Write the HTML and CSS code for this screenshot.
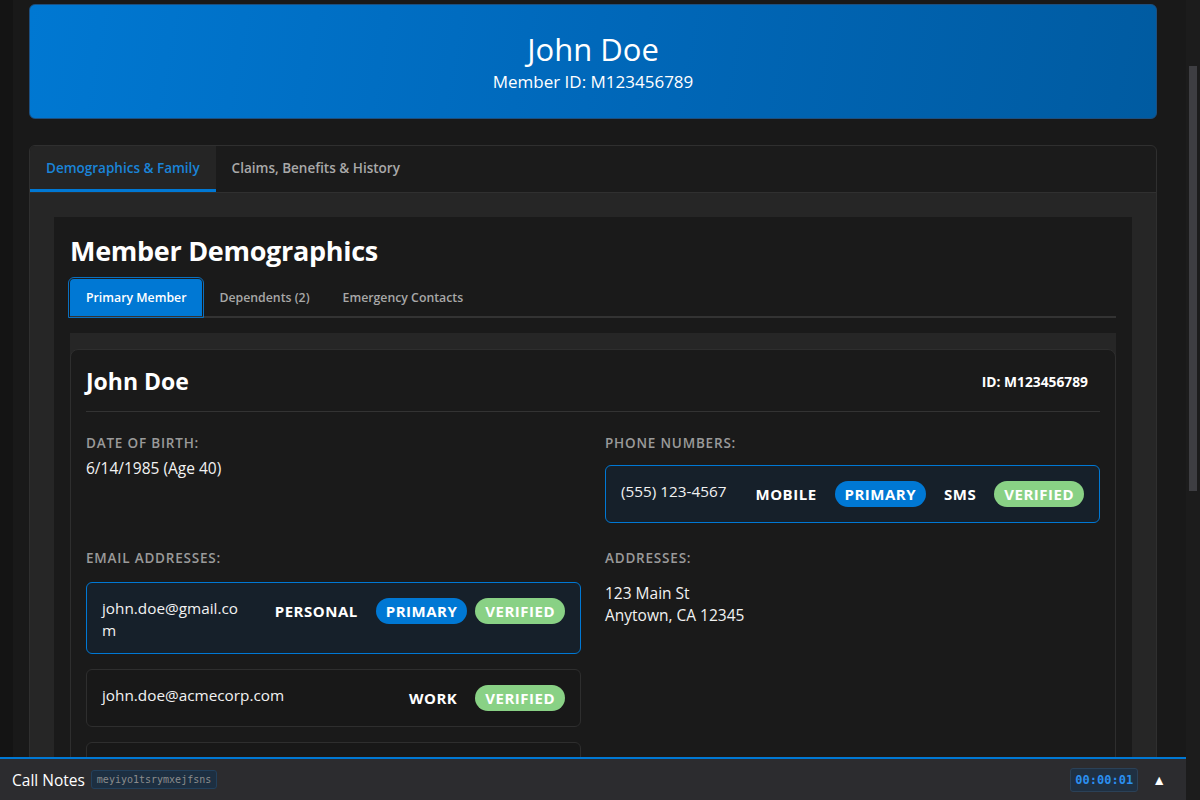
FILE: index.html
```html
<!DOCTYPE html>
<html lang="en">
<head>
<meta charset="utf-8">
<title>Member Profile – John Doe</title>
<link rel="stylesheet" href="styles.css">
</head>
<body>
<main class="page">
  <header class="member-header">
    <h1 class="member-name">John Doe</h1>
    <p class="member-id">Member ID: M123456789</p>
  </header>

  <section class="tabs">
    <nav class="tab-bar">
      <button class="tab active">Demographics &amp; Family</button>
      <button class="tab">Claims, Benefits &amp; History</button>
    </nav>
    <div class="tab-panel">
      <div class="demo">
        <h2 class="demo-title">Member Demographics</h2>
        <nav class="subtabs">
          <button class="subtab active">Primary Member</button>
          <button class="subtab">Dependents (2)</button>
          <button class="subtab">Emergency Contacts</button>
        </nav>
        <div class="subpanel">
          <article class="card">
            <div class="card-head">
              <h3 class="card-name">John Doe</h3>
              <span class="card-id">ID: M123456789</span>
            </div>
            <div class="grid">
              <div class="field">
                <div class="label">Date of Birth:</div>
                <div class="value dob">6/14/1985 (Age 40)</div>
              </div>
              <div class="field">
                <div class="label">Phone Numbers:</div>
                <div class="contact-list phones">
                  <div class="contact primary phone-row">
                    <span class="contact-text phone">(555) 123-4567</span>
                    <span class="badges">
                      <span class="badge type">MOBILE</span>
                      <span class="badge pri">PRIMARY</span>
                      <span class="badge type">SMS</span>
                      <span class="badge ok">VERIFIED</span>
                    </span>
                  </div>
                </div>
              </div>
              <div class="field">
                <div class="label">Email Addresses:</div>
                <div class="contact-list">
                  <div class="contact primary">
                    <span class="contact-text">john.doe@gmail.com</span>
                    <span class="badges">
                      <span class="badge type">PERSONAL</span>
                      <span class="badge pri">PRIMARY</span>
                      <span class="badge ok">VERIFIED</span>
                    </span>
                  </div>
                  <div class="contact">
                    <span class="contact-text">john.doe@acmecorp.com</span>
                    <span class="badges">
                      <span class="badge type">WORK</span>
                      <span class="badge ok">VERIFIED</span>
                    </span>
                  </div>
                  <div class="contact">
                    <span class="contact-text">jdoe85@outlook.com</span>
                    <span class="badges">
                      <span class="badge type">OTHER</span>
                      <span class="badge ok">VERIFIED</span>
                    </span>
                  </div>
                </div>
              </div>
              <div class="field">
                <div class="label">Addresses:</div>
                <div class="value address">123 Main St<br>Anytown, CA 12345</div>
              </div>
            </div>
          </article>
        </div>
      </div>
    </div>
  </section>
</main>

<footer class="callbar">
  <span class="callbar-title">Call Notes</span>
  <span class="session-chip">meyiyo1tsrymxejfsns</span>
  <span class="callbar-spacer"></span>
  <span class="timer">00:00:01</span>
  <button class="toggle">▲</button>
</footer>

<div class="scrollbar" aria-hidden="true"><div class="scrollbar-thumb"></div></div>
</body>
</html>
```

FILE: styles.css
```css
* { box-sizing: border-box; }

html {
  background: #141414;
}

body {
  margin: 0;
  height: 100vh;
  overflow: hidden;
  display: grid;
  grid-template-columns: 1fr 14px;
  grid-template-rows: 1fr 43px;
  background: #141414;
  color: #ececec;
  font-family: "Open Sans", "Noto Sans", sans-serif;
}

.page {
  grid-column: 1;
  grid-row: 1;
  min-height: 0;
  overflow: hidden;
  margin-left: 13px;
  padding: 4px 29px 0 16px;
  background: #191919;
}

/* header */
.member-header {
  background: linear-gradient(100deg, #0078d2 0%, #0068ba 50%, #005ba1 100%);
  border: 1px solid #1c4f80;
  border-radius: 6px;
  padding: 25px 20px 24px;
  text-align: center;
  color: #fff;
}

.member-name {
  margin: 0;
  font-size: 31px;
  font-weight: 400;
  line-height: 38px;
}

.member-id {
  margin: 2px 0 0;
  font-size: 17px;
  line-height: 24px;
}

/* main tabs */
.tabs {
  margin-top: 26px;
  border: 1px solid #2f2f2f;
  border-radius: 6px;
  background: #1b1b1b;
  overflow: hidden;
}

.tab-bar {
  display: flex;
  border-bottom: 1px solid #303030;
}

.tab {
  height: 46px;
  padding: 0 16px;
  background: none;
  border: 0;
  border-bottom: 3px solid transparent;
  color: #a9a9a9;
  font-family: inherit;
  font-size: 13.5px;
  font-weight: 600;
}

.tab.active {
  background: #252525;
  color: #1a84d8;
  border-bottom-color: #0078d4;
}

.tab-panel {
  background: #262626;
  padding: 24px;
}

.demo {
  background: #1a1a1a;
  padding: 16px;
}

.demo-title {
  margin: 0 0 10px;
  font-size: 27px;
  font-weight: 700;
  line-height: 36px;
  letter-spacing: -0.3px;
  color: #fff;
}

.subtabs {
  display: flex;
  border-bottom: 2px solid #333;
}

.subtab {
  height: 37px;
  padding: 0 16px;
  margin-right: 1px;
  background: none;
  border: 0;
  border-radius: 4px 4px 0 0;
  color: #a8a8a8;
  font-family: inherit;
  font-size: 12.3px;
  font-weight: 600;
}

.subtab.active {
  background: #0078d4;
  color: #fff;
  outline: 1px solid #0a70c0;
  outline-offset: 1px;
}

.subpanel {
  margin-top: 15px;
  padding-top: 16px;
  background: #262626;
}

.card {
  background: #1a1a1a;
  border: 1px solid #2e2e2e;
  border-radius: 8px;
  padding: 15px;
}

.card-head {
  display: flex;
  justify-content: space-between;
  align-items: center;
  padding-bottom: 14px;
  border-bottom: 1px solid #333;
  margin-bottom: 22px;
}

.card-name {
  margin: 0;
  font-size: 23px;
  font-weight: 700;
  line-height: 32px;
  color: #fff;
}

.card-id {
  padding: 0 12px;
  font-size: 13.8px;
  font-weight: 700;
  color: #fff;
}

.grid {
  display: grid;
  grid-template-columns: 1fr 1fr;
  column-gap: 24px;
  row-gap: 26px;
}

.label {
  font-size: 13.5px;
  font-weight: 600;
  line-height: 18px;
  letter-spacing: 0.8px;
  text-transform: uppercase;
  color: #9a9a9a;
}

.value {
  font-size: 15.5px;
  line-height: 22px;
  color: #f2f2f2;
}

.value.dob { margin-top: 5px; }
.value.address { margin-top: 15px; }

.contact-list { margin-top: 15px; }
.contact-list.phones { margin-top: 13px; }

.contact {
  display: flex;
  justify-content: space-between;
  align-items: flex-start;
  gap: 20px;
  padding: 15px;
  margin-bottom: 15px;
  background: #181818;
  border: 1px solid #2e2e2e;
  border-radius: 6px;
}

.contact:last-child { margin-bottom: 0; }

.contact.primary {
  background: #16202a;
  border-color: #0078d4;
}

.contact.phone-row { gap: 10px; }

.contact-text {
  min-width: 0;
  margin: -1px 0 -3px;
  font-size: 15.3px;
  line-height: 22px;
  color: #f2f2f2;
  word-break: break-all;
}

.contact-text.phone {
  white-space: nowrap;
  word-break: normal;
}

.badges {
  display: flex;
  flex-shrink: 0;
  gap: 8px;
}

.badge {
  padding: 0 10px;
  border-radius: 13px;
  font-size: 15px;
  font-weight: 700;
  line-height: 26px;
  letter-spacing: 0.5px;
  color: #fff;
}

.badge.pri { background: #0078d4; }
.badge.ok { background: #89d185; }

/* bottom call bar */
.callbar {
  grid-column: 1;
  grid-row: 2;
  display: flex;
  align-items: center;
  padding: 0 20px 0 12px;
  background: #2c2c2f;
  border-top: 2px solid #0078d4;
}

.callbar-title {
  font-size: 15.5px;
  color: #fff;
}

.session-chip {
  margin-left: 6px;
  padding: 3px 5px;
  font-family: "DejaVu Sans Mono", "Liberation Mono", monospace;
  font-size: 10px;
  color: #8c8c8c;
  background: #1d2f41;
  border: 1px solid #22405c;
  border-radius: 3px;
}

.callbar-spacer { flex: 1; }

.timer {
  padding: 4px 4px;
  font-family: "DejaVu Sans Mono", "Liberation Mono", monospace;
  font-size: 12px;
  font-weight: 700;
  color: #2b8ff0;
  background: #1f3042;
  border: 1px solid #2b4157;
  border-radius: 3px;
}

.toggle {
  margin-left: 14px;
  padding: 0;
  background: none;
  border: 0;
  color: #fff;
  font-size: 14px;
}

/* page scrollbar */
.scrollbar {
  grid-column: 2;
  grid-row: 1 / span 2;
  background: #1c1c1c;
}

.scrollbar-thumb {
  width: 8px;
  height: 425px;
  margin: 66px 0 0 3px;
  background: #3e3e42;
}
```
